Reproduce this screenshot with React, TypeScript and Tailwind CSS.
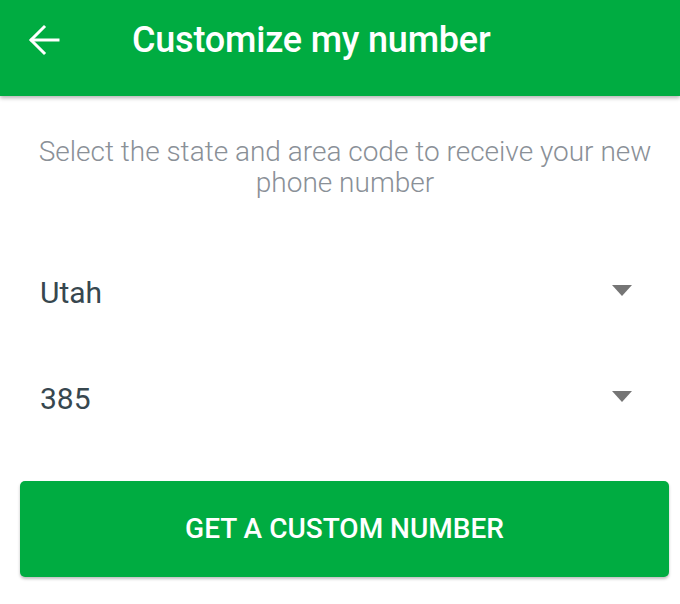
import React, { useState } from 'react';

const BackArrow: React.FC = () => (
  <svg width="32" height="32" viewBox="0 0 32 32" fill="none" stroke="white" strokeWidth="3" strokeLinecap="square">
    <path d="M30 16H4" />
    <path d="M16 3L3 16l13 13" />
  </svg>
);

const Caret: React.FC = () => (
  <svg width="20" height="11" viewBox="0 0 20 11">
    <path d="M0 0h20L10 11z" fill="#757575" />
  </svg>
);

interface DropdownProps {
  value: string;
}

const Dropdown: React.FC<DropdownProps> = ({ value }) => (
  <div className="flex items-center justify-between h-[106px] pl-10 pr-12 cursor-pointer">
    <span className="text-[30px] text-[#37474f]">{value}</span>
    <span className="-mt-1">
      <Caret />
    </span>
  </div>
);

export default function App() {
  const [state] = useState('Utah');
  const [areaCode] = useState('385');

  return (
    <div className="w-[680px] h-[604px] bg-white overflow-hidden" style={{ fontFamily: 'Roboto, "Noto Sans", sans-serif' }}>
      <header className="relative z-10 h-[96px] bg-[#00ac41] shadow-[0_2px_4px_rgba(0,0,0,0.3)]">
        <div className="h-[80px] flex items-center">
          <button className="ml-7 w-8 h-8 flex items-center justify-center">
            <BackArrow />
          </button>
          <h1 className="ml-[72px] text-[36px] font-medium text-white tracking-[-0.2px]">Customize my number</h1>
        </div>
      </header>

      <p className="mt-[40px] pl-[34px] pr-6 text-center text-[28px] leading-[31px] font-light text-[#8a9097]">
        Select the state and area code to receive your new phone number
      </p>

      <div className="mt-[41px]">
        <Dropdown value={state} />
        <Dropdown value={areaCode} />
      </div>

      <div className="ml-5 mr-[11px] mt-[30px]">
        <button className="w-full h-[96px] rounded-[5px] bg-[#00ac41] text-white text-[28px] font-medium shadow-[0_2px_3px_rgba(0,0,0,0.25)]">
          GET A CUSTOM NUMBER
        </button>
      </div>
    </div>
  );
}
